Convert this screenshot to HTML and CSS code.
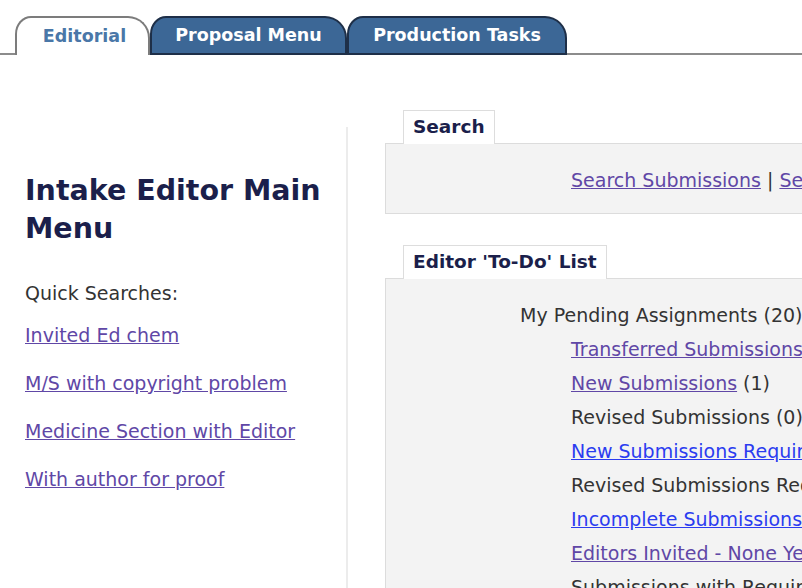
FILE: index.html
```html
<!DOCTYPE html>
<html>
<head>
<meta charset="utf-8">
<link rel="stylesheet" href="styles.css">
</head>
<body>
<div class="tabbar">
  <div class="tab tab-active">Editorial</div>
  <div class="tab tab-blue tab-proposal">Proposal Menu</div>
  <div class="tab tab-blue tab-production">Production Tasks</div>
</div>
<div class="main">
  <div class="left">
    <h1 class="title">Intake Editor Main Menu</h1>
    <div class="qs-label">Quick Searches:</div>
    <a class="qlink qlink-first" href="#">Invited Ed chem</a>
    <a class="qlink" href="#">M/S with copyright problem</a>
    <a class="qlink" href="#">Medicine Section with Editor</a>
    <a class="qlink" href="#">With author for proof</a>
  </div>
  <div class="right">
    <div class="box-tab">Search</div>
    <div class="panel panel-search">
      <div class="search-line"><a class="visited" href="#">Search Submissions</a> | <a class="visited" href="#">Search People</a></div>
    </div>
    <div class="box-tab">Editor 'To-Do' List</div>
    <div class="panel panel-todo">
      <div class="todo-head">My Pending Assignments (20)</div>
      <div class="todo-items">
        <div class="row"><a class="visited" href="#">Transferred Submissions</a> (0)</div>
        <div class="row"><a class="visited" href="#">New Submissions</a> (1)</div>
        <div class="row">Revised Submissions (0)</div>
        <div class="row"><a class="fresh" href="#">New Submissions Requiring Assignment</a> (3)</div>
        <div class="row">Revised Submissions Requiring Assignment (0)</div>
        <div class="row"><a class="fresh" href="#">Incomplete Submissions</a> (2)</div>
        <div class="row"><a class="visited" href="#">Editors Invited - None Yet Agreed</a> (1)</div>
        <div class="row">Submissions with Required Reviews Complete (0)</div>
      </div>
    </div>
  </div>
</div>
</body>
</html>
```
FILE: styles.css
```css
html, body {
  margin: 0;
  padding: 0;
  background: #ffffff;
  overflow: hidden;
  width: 802px;
  height: 588px;
}
body {
  font-family: "DejaVu Sans", Verdana, sans-serif;
  color: #333333;
}
.tabbar {
  display: flex;
  align-items: flex-end;
  padding: 16px 0 0 15px;
  height: 37px;
  border-bottom: 2px solid #8c8c8c;
}
.tab {
  box-sizing: border-box;
  height: 39px;
  margin-bottom: -2px;
  display: flex;
  align-items: center;
  justify-content: center;
  font-weight: bold;
  font-size: 17.5px;
  border-radius: 16px 22px 0 0 / 18px 22px 0 0;
  padding-bottom: 2px;
}
.tab-active {
  width: 135px;
  background: #ffffff;
  color: #4a77a8;
  border: 2px solid #7c7c7c;
  border-bottom: none;
  padding-left: 4px;
}
.tab-blue {
  background: #3c6796;
  color: #ffffff;
  border: 2px solid #1e2f48;
}
.tab-proposal {
  width: 197px;
}
.tab-production {
  width: 220px;
}
.main {
  display: flex;
  align-items: flex-start;
}
.left {
  box-sizing: border-box;
  width: 348px;
  flex: none;
  margin-top: 72px;
  padding: 45px 0 0 25px;
  border-right: 2px solid #ececec;
  height: 480px;
}
.title {
  margin: 0;
  font-size: 28.5px;
  line-height: 38px;
  font-weight: bold;
  color: #1b1f4b;
  width: 310px;
}
.qs-label {
  margin-top: 33px;
  font-size: 19px;
  line-height: 24px;
  color: #333333;
}
.qlink {
  display: block;
  margin-top: 24px;
  font-size: 19px;
  line-height: 24px;
  color: #6047a6;
  white-space: nowrap;
}
.qlink-first {
  margin-top: 18px;
}
.right {
  flex: none;
  width: 900px;
  padding: 55px 0 0 37px;
}
.box-tab {
  display: inline-block;
  box-sizing: border-box;
  margin-left: 18px;
  height: 34px;
  padding: 0 9px;
  font-size: 18.5px;
  line-height: 32px;
  font-weight: bold;
  color: #1b1f4b;
  background: #ffffff;
  border: 1px solid #dddddd;
  border-bottom: none;
  position: relative;
  z-index: 1;
  vertical-align: bottom;
}
.panel {
  box-sizing: border-box;
  margin-top: -1px;
  background: #f3f3f3;
  border: 1px solid #dcdcdc;
  font-size: 19px;
  line-height: 24px;
}
.panel-search {
  height: 71px;
  padding: 24px 0 0 185px;
  margin-bottom: 31px;
}
.search-line {
  white-space: nowrap;
}
.panel-todo {
  height: 340px;
  padding: 19px 0 0 134px;
}
.todo-head {
  line-height: 34px;
  white-space: nowrap;
}
.todo-items {
  padding-left: 51px;
}
.row {
  line-height: 34px;
  white-space: nowrap;
}
a.visited {
  color: #6047a6;
}
a.fresh {
  color: #2b3cf0;
}
```
